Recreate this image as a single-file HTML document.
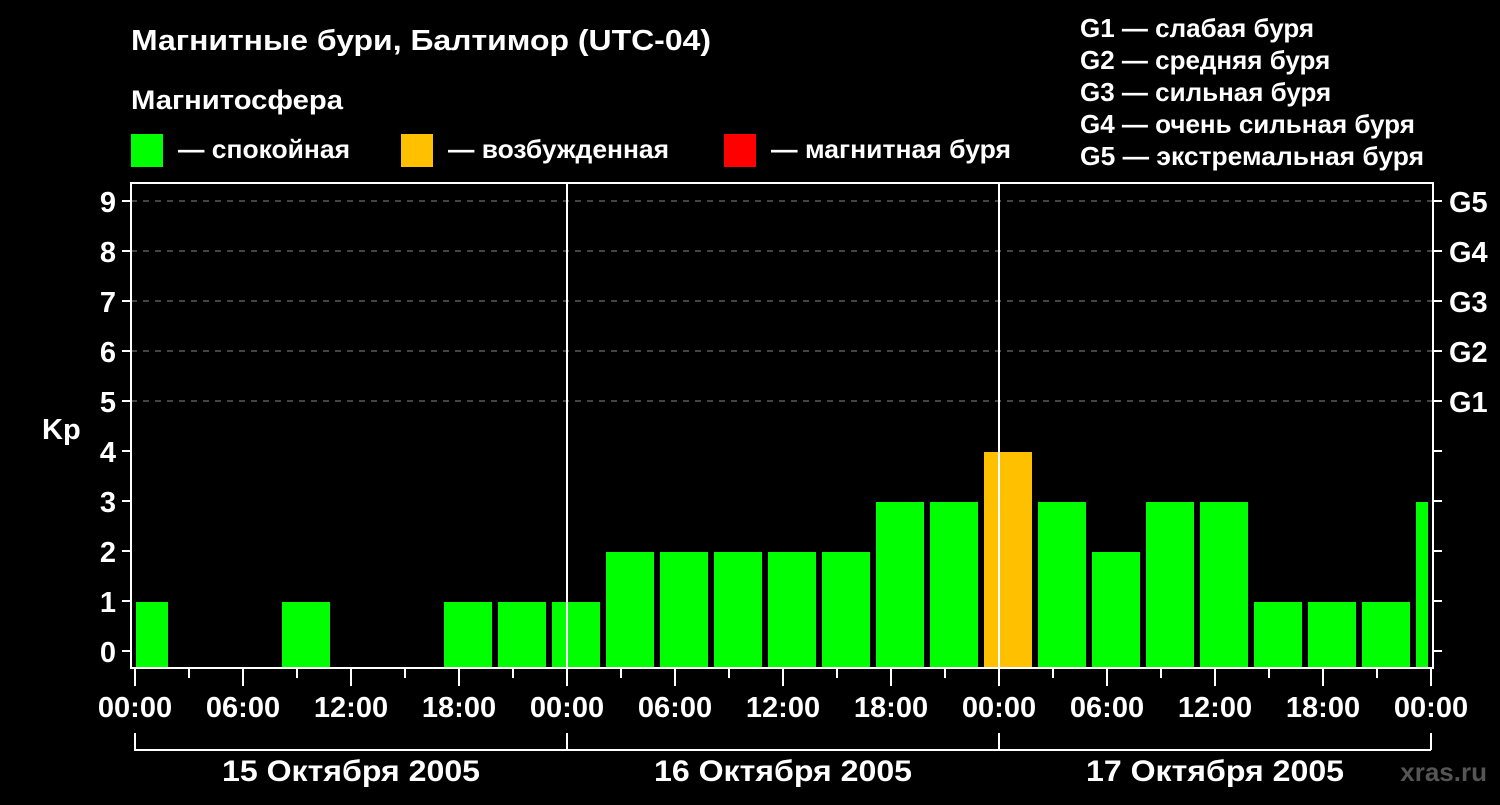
<!DOCTYPE html>
<html><head><meta charset="utf-8"><style>
body{margin:0;background:#000;width:1500px;height:800px;overflow:hidden}
svg text{font-family:"Liberation Sans",sans-serif;font-weight:bold;fill:#fff}
</style></head><body>
<svg width="1500" height="800" xmlns="http://www.w3.org/2000/svg">
<text x="131" y="50" font-size="29" textLength="580" lengthAdjust="spacingAndGlyphs">Магнитные бури, Балтимор (UTC-04)</text>
<text x="131" y="109" font-size="27" textLength="212" lengthAdjust="spacingAndGlyphs">Магнитосфера</text>
<rect x="131" y="134" width="32" height="33" fill="#00ff00"/>
<text x="178" y="158" font-size="26" textLength="172" lengthAdjust="spacingAndGlyphs">— спокойная</text>
<rect x="401" y="134" width="32" height="33" fill="#ffc000"/>
<text x="448" y="158" font-size="26" textLength="221" lengthAdjust="spacingAndGlyphs">— возбужденная</text>
<rect x="724" y="134" width="32" height="33" fill="#ff0000"/>
<text x="771" y="158" font-size="26" textLength="240" lengthAdjust="spacingAndGlyphs">— магнитная буря</text>
<g font-size="26">
<text x="1080" y="37">G1 — слабая буря</text>
<text x="1080" y="69">G2 — средняя буря</text>
<text x="1080" y="101">G3 — сильная буря</text>
<text x="1080" y="133">G4 — очень сильная буря</text>
<text x="1080" y="165" textLength="344" lengthAdjust="spacingAndGlyphs">G5 — экстремальная буря</text>
</g>
<g stroke="#888" stroke-width="1" stroke-dasharray="6,6">
<line x1="131" y1="201" x2="1433" y2="201"/><line x1="131" y1="251" x2="1433" y2="251"/>
<line x1="131" y1="301" x2="1433" y2="301"/><line x1="131" y1="351" x2="1433" y2="351"/>
<line x1="131" y1="401" x2="1433" y2="401"/>
</g>
<g fill="#00ff00">
<rect x="136" y="602" width="32" height="66"/>
<rect x="282" y="602" width="48" height="66"/>
<rect x="444" y="602" width="48" height="66"/>
<rect x="498" y="602" width="48" height="66"/>
<rect x="552" y="602" width="48" height="66"/>
<rect x="606" y="552" width="48" height="116"/>
<rect x="660" y="552" width="48" height="116"/>
<rect x="714" y="552" width="48" height="116"/>
<rect x="768" y="552" width="48" height="116"/>
<rect x="822" y="552" width="48" height="116"/>
<rect x="876" y="502" width="48" height="166"/>
<rect x="930" y="502" width="48" height="166"/>
<rect x="1038" y="502" width="48" height="166"/>
<rect x="1092" y="552" width="48" height="116"/>
<rect x="1146" y="502" width="48" height="166"/>
<rect x="1200" y="502" width="48" height="166"/>
<rect x="1254" y="602" width="48" height="66"/>
<rect x="1308" y="602" width="48" height="66"/>
<rect x="1362" y="602" width="48" height="66"/>
<rect x="1416" y="502" width="12" height="166"/>
</g>
<rect x="984" y="452" width="48" height="216" fill="#ffc000"/>
<g stroke="#fff" stroke-width="2" fill="none">
<rect x="131" y="183" width="1302" height="485"/>
<line x1="567" y1="183" x2="567" y2="668"/><line x1="999" y1="183" x2="999" y2="668"/>
<path d="M122 201h9M122 251h9M122 301h9M122 351h9M122 401h9M122 451h9M122 501h9M122 551h9M122 601h9M122 651h9"/>
<path d="M1433 201h9M1433 251h9M1433 301h9M1433 351h9M1433 401h9M1433 451h9M1433 501h9M1433 551h9M1433 601h9M1433 651h9"/>
<path d="M135 668v18M243 668v18M351 668v18M459 668v18M567 668v18M675 668v18M783 668v18M891 668v18M999 668v18M1107 668v18M1215 668v18M1323 668v18M1431 668v18"/>
<path d="M189 668v10M297 668v10M405 668v10M513 668v10M621 668v10M729 668v10M837 668v10M945 668v10M1053 668v10M1161 668v10M1269 668v10M1377 668v10"/>
<path d="M135 733v17h1296M567 733v17M999 733v17M1431 733v17"/>
</g>
<g font-size="29" text-anchor="end">
<text x="116" y="212">9</text><text x="116" y="262">8</text><text x="116" y="312">7</text>
<text x="116" y="362">6</text><text x="116" y="412">5</text><text x="116" y="462">4</text>
<text x="116" y="512">3</text><text x="116" y="562">2</text><text x="116" y="612">1</text>
<text x="116" y="662">0</text>
</g>
<text x="42" y="439" font-size="29">Kp</text>
<g font-size="29">
<text x="1449" y="212">G5</text><text x="1449" y="262">G4</text><text x="1449" y="312">G3</text>
<text x="1449" y="362">G2</text><text x="1449" y="412">G1</text>
</g>
<g font-size="29" text-anchor="middle">
<text x="135" y="717">00:00</text><text x="243" y="717">06:00</text><text x="351" y="717">12:00</text>
<text x="459" y="717">18:00</text><text x="567" y="717">00:00</text><text x="675" y="717">06:00</text>
<text x="783" y="717">12:00</text><text x="891" y="717">18:00</text><text x="999" y="717">00:00</text>
<text x="1107" y="717">06:00</text><text x="1215" y="717">12:00</text><text x="1323" y="717">18:00</text>
<text x="1431" y="717">00:00</text>
<text x="351" y="781" font-size="30" textLength="258" lengthAdjust="spacingAndGlyphs">15 Октября 2005</text>
<text x="783" y="781" font-size="30" textLength="258" lengthAdjust="spacingAndGlyphs">16 Октября 2005</text>
<text x="1215" y="781" font-size="30" textLength="258" lengthAdjust="spacingAndGlyphs">17 Октября 2005</text>
</g>
<text x="1487" y="781" font-size="26" text-anchor="end" style="fill:#555">xras.ru</text>
</svg>
</body></html>
